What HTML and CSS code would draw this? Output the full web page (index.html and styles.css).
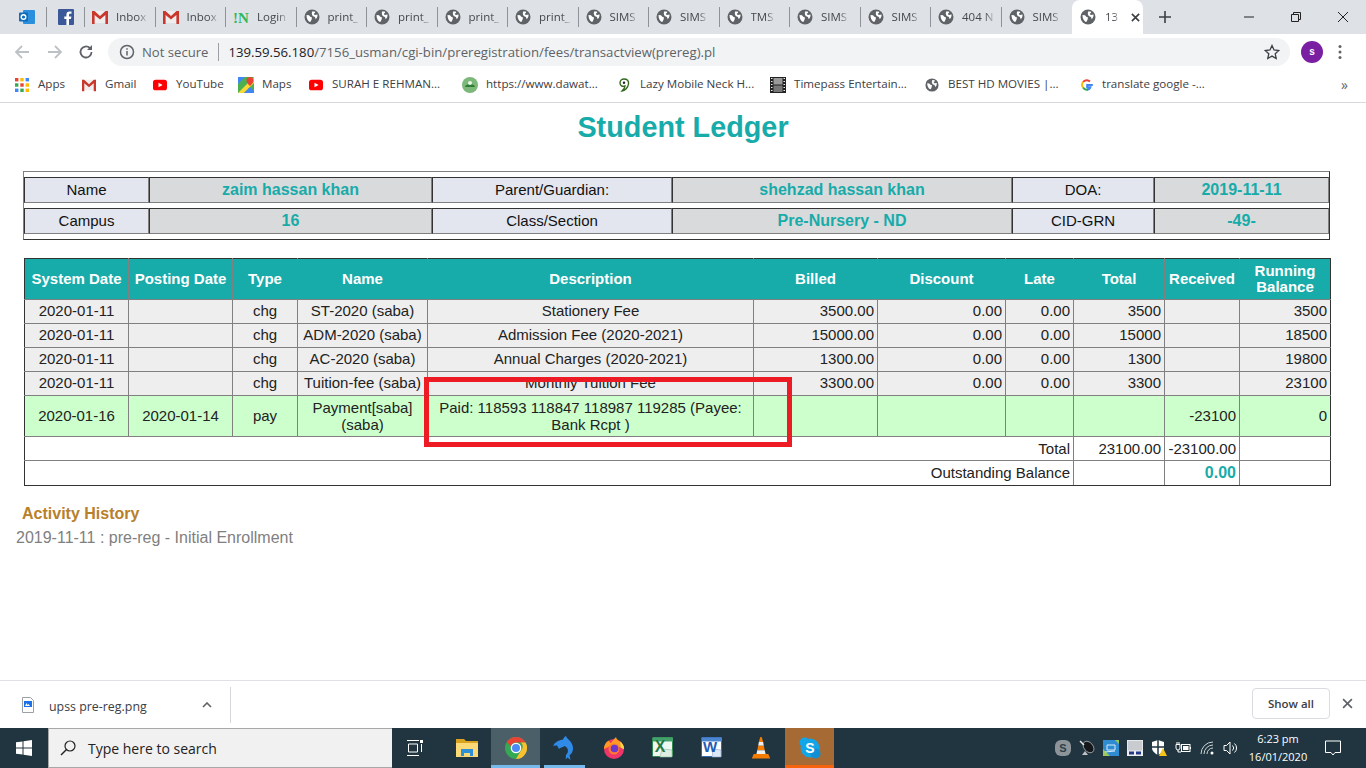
FILE: index.html
```html
<!DOCTYPE html>
<html lang="en">
<head>
<meta charset="utf-8">
<title>Student Ledger</title>
<link rel="stylesheet" href="styles.css">
</head>
<body>
<svg class="defs" width="0" height="0" aria-hidden="true">
  <symbol id="globe" viewBox="0 0 16 16">
    <circle cx="8" cy="8" r="7.500" fill="#5f6368"/>
    <path d="M2.500 6l2.500.2 1.300 1.600 1.700.6-.4 2.200-.9 2-.8.3C4 12 2.400 9.500 2.500 6zM8 2.500l2.700-.1.600 1.200-1.500 1.100.9 1.300 2.800-.4c.2 1.700-.4 3.400-1.700 4.600l-.9-2.200-2.200-.9-.9-2z" fill="#fff"/>
  </symbol>
  <symbol id="gmail" viewBox="0 0 16 14">
    <path d="M0 1h16v12H0z" fill="#eee"/>
    <path d="M0 1h2.500L8 6l5.500-5H16v13h-2.600V5L8 9.500 2.600 5v9H0z" fill="#c8382c"/>
  </symbol>
  <symbol id="yt" viewBox="0 0 16 12">
    <rect width="16" height="12" rx="3" fill="#f00"/>
    <path d="M6.300 3.300L11 6 6.300 8.700z" fill="#fff"/>
  </symbol>
</svg>

<header class="chrome">
  <div class="tabstrip">
    <div class="tab pinned">
      <svg class="ico16" viewBox="0 0 16 16"><rect x="4" y="1" width="12" height="14" rx="1" fill="#2a8fdc"/><rect x="0" y="3.500" width="9" height="9" rx="1" fill="#0f6cbd"/><circle cx="4.500" cy="8" r="2.300" fill="none" stroke="#fff" stroke-width="1.400"/></svg>
    </div>
    <div class="tab pinned">
      <svg class="ico16" viewBox="0 0 16 16"><rect width="16" height="16" rx="1" fill="#3b5998"/><path d="M11 16V10h2l.4-2.500H11V6c0-.8.3-1.200 1.200-1.200h1.300V2.600C13 2.500 12.300 2.500 11.500 2.500 9.600 2.500 8.400 3.600 8.400 5.700v1.800H6.300V10h2.100v6z" fill="#fff"/></svg>
    </div>
    <div class="tab"><svg class="ico16"><use href="#gmail"/></svg><span class="tab-title">Inbox</span></div>
    <div class="tab"><svg class="ico16"><use href="#gmail"/></svg><span class="tab-title">Inbox</span></div>
    <div class="tab"><svg class="ico16" viewBox="0 0 16 16"><text x="0" y="14" class="login-mark">!N</text></svg><span class="tab-title">Login</span></div>
    <div class="tab"><svg class="ico16"><use href="#globe"/></svg><span class="tab-title">print_</span></div>
    <div class="tab"><svg class="ico16"><use href="#globe"/></svg><span class="tab-title">print_</span></div>
    <div class="tab"><svg class="ico16"><use href="#globe"/></svg><span class="tab-title">print_</span></div>
    <div class="tab"><svg class="ico16"><use href="#globe"/></svg><span class="tab-title">print_</span></div>
    <div class="tab"><svg class="ico16"><use href="#globe"/></svg><span class="tab-title">SIMS</span></div>
    <div class="tab"><svg class="ico16"><use href="#globe"/></svg><span class="tab-title">SIMS</span></div>
    <div class="tab"><svg class="ico16"><use href="#globe"/></svg><span class="tab-title">TMS</span></div>
    <div class="tab"><svg class="ico16"><use href="#globe"/></svg><span class="tab-title">SIMS</span></div>
    <div class="tab"><svg class="ico16"><use href="#globe"/></svg><span class="tab-title">SIMS</span></div>
    <div class="tab"><svg class="ico16"><use href="#globe"/></svg><span class="tab-title">404 N</span></div>
    <div class="tab last"><svg class="ico16"><use href="#globe"/></svg><span class="tab-title">SIMS</span></div>
    <div class="tab active"><svg class="ico16"><use href="#globe"/></svg><span class="tab-title short">13</span>
      <svg class="tab-x" viewBox="0 0 10 10"><path d="M1 1l8 8M9 1l-8 8" stroke="#3c4043" stroke-width="1.800"/></svg>
    </div>
    <svg class="newtab" viewBox="0 0 12 12"><path d="M6 0v12M0 6h12" stroke="#3c4043" stroke-width="1.600"/></svg>
    <div class="winctl">
      <svg class="win-ico" viewBox="0 0 12 12"><path d="M1 6h10" stroke="#222" stroke-width="1"/></svg>
      <svg class="win-ico" viewBox="0 0 12 12"><path d="M1.500 3.500h7v7h-7zM3.500 3.500v-2h7v7h-2" fill="none" stroke="#222" stroke-width="1"/></svg>
      <svg class="win-ico" viewBox="0 0 12 12"><path d="M1 1l10 10M11 1L1 11" stroke="#222" stroke-width="1"/></svg>
    </div>
  </div>

  <div class="toolbar">
    <svg class="nav-ico first" viewBox="0 0 16 16"><path d="M15 8H2M8 2L2 8l6 6" fill="none" stroke="#bdc1c6" stroke-width="1.800"/></svg>
    <svg class="nav-ico forward" viewBox="0 0 16 16"><path d="M1 8h13M8 2l6 6-6 6" fill="none" stroke="#bdc1c6" stroke-width="1.800"/></svg>
    <svg class="nav-ico" viewBox="0 0 16 16"><path d="M13.500 8a5.500 5.500 0 1 1-1.700-4" fill="none" stroke="#5f6368" stroke-width="1.800"/><path d="M14 1v5H9z" fill="#5f6368"/></svg>
    <div class="omnibox">
      <svg class="info-ico" viewBox="0 0 16 16"><circle cx="8" cy="8" r="6.500" fill="none" stroke="#5f6368" stroke-width="1.500"/><path d="M8 7v4.500M8 4.300v1.500" stroke="#5f6368" stroke-width="1.500"/></svg>
      <span class="secure">Not secure</span>
      <span class="omni-sep"></span>
      <span class="url"><span class="host">139.59.56.180</span>/7156_usman/cgi-bin/preregistration/fees/transactview(prereg).pl</span>
      <svg class="star" viewBox="0 0 16 16"><path d="M8 1.500l2 4.500 4.800.5-3.600 3.200 1 4.800L8 12.100l-4.200 2.400 1-4.800L1.200 6.500 6 6z" fill="none" stroke="#3c4043" stroke-width="1.300"/></svg>
    </div>
    <div class="avatar">s</div>
    <svg class="kebab" viewBox="0 0 4 16"><circle cx="2" cy="2.500" r="1.500" fill="#5f6368"/><circle cx="2" cy="8" r="1.500" fill="#5f6368"/><circle cx="2" cy="13.500" r="1.500" fill="#5f6368"/></svg>
  </div>

  <div class="bookmarks">
    <div class="bm bm-apps"><svg class="ico14" viewBox="0 0 14 14"><g><rect width="3.400" height="3.400" fill="#ea4335"/><rect x="5.300" width="3.400" height="3.400" fill="#fbbc05"/><rect x="10.600" width="3.400" height="3.400" fill="#4285f4"/><rect y="5.300" width="3.400" height="3.400" fill="#34a853"/><rect x="5.300" y="5.300" width="3.400" height="3.400" fill="#ea4335"/><rect x="10.600" y="5.300" width="3.400" height="3.400" fill="#fbbc05"/><rect y="10.600" width="3.400" height="3.400" fill="#4285f4"/><rect x="5.300" y="10.600" width="3.400" height="3.400" fill="#34a853"/><rect x="10.600" y="10.600" width="3.400" height="3.400" fill="#fbbc05"/></g></svg><span>Apps</span></div>
    <div class="bm bm-gmail"><svg class="ico14"><use href="#gmail"/></svg><span>Gmail</span></div>
    <div class="bm bm-yt"><svg class="ico14"><use href="#yt"/></svg><span>YouTube</span></div>
    <div class="bm bm-maps wide-ico"><svg class="ico16" viewBox="0 0 16 16"><path d="M0 0h16v16H0z" fill="#4caf50"/><path d="M0 16L16 0v6L6 16z" fill="#fdd835"/><path d="M0 0h7L0 7z" fill="#4285f4"/><path d="M6 16l6-6 4 4v2z" fill="#4285f4"/><path d="M12 0a3.500 3.500 0 0 1 3.500 3.500C15.500 6 12 9 12 9S8.500 6 8.500 3.500A3.500 3.500 0 0 1 12 0z" fill="#ea4335"/></svg><span>Maps</span></div>
    <div class="bm bm-long"><svg class="ico14"><use href="#yt"/></svg><span>SURAH E REHMAN...</span></div>
    <div class="bm bm-longer wide-ico"><svg class="ico16" viewBox="0 0 16 16"><circle cx="8" cy="8" r="8" fill="#7cb87a"/><path d="M3 10a5 3 0 0 1 10 0z" fill="#2e7d32"/><circle cx="8" cy="6" r="2" fill="#e8f5e9"/></svg><span>https://www.dawat...</span></div>
    <div class="bm bm-long"><svg class="ico14" viewBox="0 0 14 14"><path d="M7 1c3 0 5 1.500 4.500 5C11 9.500 8 13 5 13c2-2 3-3.500 3-5-2 1-5 0-5-3C3 2.500 5 1 7 1z" fill="#fff" stroke="#33691e" stroke-width="1.400"/><circle cx="7" cy="4.800" r="1.200" fill="#222"/></svg><span>Lazy Mobile Neck H...</span></div>
    <div class="bm bm-longer wide-ico"><svg class="ico16" viewBox="0 0 16 16"><rect width="16" height="16" fill="#222"/><rect x="3.500" y="1" width="9" height="6.500" fill="#999"/><rect x="3.500" y="8.500" width="9" height="6.500" fill="#777"/><path d="M1 1.500h1.500M1 4.500h1.500M1 7.500h1.500M1 10.500h1.500M1 13.500h1.500M13.500 1.500H15M13.500 4.500H15M13.500 7.500H15M13.500 10.500H15M13.500 13.500H15" stroke="#eee" stroke-width="1.200"/></svg><span>Timepass Entertain...</span></div>
    <div class="bm bm-longer"><svg class="ico14"><use href="#globe"/></svg><span>BEST HD MOVIES |...</span></div>
    <div class="bm bm-google"><svg class="ico14" viewBox="0 0 14 14"><path d="M12.800 7H7.200v2.200h3.200A3.300 3.300 0 0 1 7 11.500" fill="none" stroke="#4285f4" stroke-width="2"/><path d="M10 3.500A4.700 4.700 0 0 0 3 4" fill="none" stroke="#ea4335" stroke-width="2"/><path d="M3 4a4.700 4.700 0 0 0 0 5.500" fill="none" stroke="#fbbc05" stroke-width="2"/><path d="M3 9.500a4.700 4.700 0 0 0 5 2" fill="none" stroke="#34a853" stroke-width="2"/></svg><span>translate google -...</span></div>
    <span class="bm-more">»</span>
  </div>
</header>

<main class="page">
  <h1 class="title">Student Ledger</h1>

  <table class="info">
    <colgroup><col class="i1"><col class="i2"><col class="i3"><col class="i4"><col class="i5"><col class="i6"></colgroup>
    <tr>
      <td class="lbl">Name</td><td class="val">zaim hassan khan</td>
      <td class="lbl">Parent/Guardian:</td><td class="val">shehzad hassan khan</td>
      <td class="lbl">DOA:</td><td class="val">2019-11-11</td>
    </tr>
    <tr>
      <td class="lbl">Campus</td><td class="val">16</td>
      <td class="lbl">Class/Section</td><td class="val">Pre-Nursery - ND</td>
      <td class="lbl">CID-GRN</td><td class="val">-49-</td>
    </tr>
  </table>

  <div class="ledger-wrap">
    <table class="ledger">
      <colgroup><col class="c1"><col class="c2"><col class="c3"><col class="c4"><col class="c5"><col class="c6"><col class="c7"><col class="c8"><col class="c9"><col class="c10"><col class="c11"></colgroup>
      <thead>
        <tr><th>System Date</th><th>Posting Date</th><th>Type</th><th>Name</th><th>Description</th><th>Billed</th><th>Discount</th><th>Late</th><th>Total</th><th>Received</th><th>Running Balance</th></tr>
      </thead>
      <tbody>
        <tr class="chg"><td class="ctr">2020-01-11</td><td></td><td class="ctr">chg</td><td class="ctr">ST-2020 (saba)</td><td class="ctr">Stationery Fee</td><td class="num">3500.00</td><td class="num">0.00</td><td class="num">0.00</td><td class="num">3500</td><td></td><td class="num">3500</td></tr>
        <tr class="chg"><td class="ctr">2020-01-11</td><td></td><td class="ctr">chg</td><td class="ctr">ADM-2020 (saba)</td><td class="ctr">Admission Fee (2020-2021)</td><td class="num">15000.00</td><td class="num">0.00</td><td class="num">0.00</td><td class="num">15000</td><td></td><td class="num">18500</td></tr>
        <tr class="chg"><td class="ctr">2020-01-11</td><td></td><td class="ctr">chg</td><td class="ctr">AC-2020 (saba)</td><td class="ctr">Annual Charges (2020-2021)</td><td class="num">1300.00</td><td class="num">0.00</td><td class="num">0.00</td><td class="num">1300</td><td></td><td class="num">19800</td></tr>
        <tr class="chg"><td class="ctr">2020-01-11</td><td></td><td class="ctr">chg</td><td class="ctr">Tuition-fee (saba)</td><td class="ctr">Monthly Tuition Fee</td><td class="num">3300.00</td><td class="num">0.00</td><td class="num">0.00</td><td class="num">3300</td><td></td><td class="num">23100</td></tr>
        <tr class="pay"><td class="ctr">2020-01-16</td><td class="ctr">2020-01-14</td><td class="ctr">pay</td><td class="ctr">Payment[saba] (saba)</td><td class="ctr">Paid: 118593 118847 118987 119285 (Payee: Bank Rcpt )</td><td></td><td></td><td></td><td></td><td class="num">-23100</td><td class="num">0</td></tr>
        <tr class="sum"><td class="num" colspan="8">Total</td><td class="num">23100.00</td><td class="num">-23100.00</td><td></td></tr>
        <tr class="sum last-sum"><td class="num" colspan="8">Outstanding Balance</td><td></td><td class="num balance">0.00</td><td></td></tr>
      </tbody>
    </table>
    <div class="highlight"></div>
  </div>

  <h2 class="activity">Activity History</h2>
  <p class="history">2019-11-11 : pre-reg - Initial Enrollment</p>
</main>

<section class="downloads">
  <div class="dl-item">
    <svg class="dl-file" viewBox="0 0 12 16"><path d="M.5.500h8l3 3v12H.5z" fill="#fff" stroke="#9aa0a6"/><rect x="2" y="4" width="8" height="6" fill="#1a73e8"/><path d="M3 9l1.500-3 1 2 1-1 1.500 2z" fill="#fff"/></svg>
    <span class="dl-name">upss pre-reg.png</span>
    <svg class="dl-chev" viewBox="0 0 10 6"><path d="M1 5l4-4 4 4" fill="none" stroke="#5f6368" stroke-width="1.600"/></svg>
  </div>
  <button class="showall">Show all</button>
  <svg class="dl-close" viewBox="0 0 10 10"><path d="M1 1l8 8M9 1l-8 8" stroke="#5f6368" stroke-width="1.500"/></svg>
</section>

<footer class="taskbar">
  <div class="start"><svg class="start-ico" viewBox="0 0 16 16"><path d="M0 2.300L6.500 1.400V7.500H0zM7.500 1.300L16 0v7.500H7.500zM0 8.500h6.500v6.100L0 13.700zM7.500 8.500H16V16l-8.500-1.300z" fill="#fff"/></svg></div>
  <div class="search">
    <svg class="search-ico" viewBox="0 0 16 16"><circle cx="10" cy="6" r="5" fill="none" stroke="#222" stroke-width="1.200"/><path d="M6.500 9.500L1 15" stroke="#222" stroke-width="1.400"/></svg>
    <span>Type here to search</span>
  </div>
  <div class="app taskview"><svg class="tb-ico-s" viewBox="0 0 16 16"><path d="M0 .500h12M0 15.500h12M1.500 4h9v8h-9zM14.500 4v8" fill="none" stroke="#fff" stroke-width="1"/><rect x="13" y="0" width="3" height="3" fill="#fff"/></svg></div>
  <div class="app"><svg class="tb-ico" viewBox="0 0 22 22"><path d="M0 2h8l2 2h12v16H0z" fill="#d9a21f"/><path d="M0 6h22v14H0z" fill="#fcd977"/><path d="M5 12h12v7h-3v-3H8v3H5z" fill="#2d8fd5"/></svg></div>
  <div class="app app-on"><svg class="tb-ico" viewBox="0 0 22 22"><circle cx="11" cy="11" r="11" fill="#34a853"/><path d="M11 0a11 11 0 0 1 9.530 5.500H11a5.500 5.500 0 0 0-5.200 3.700L1.800 5A11 11 0 0 1 11 0z" fill="#ea4335"/><path d="M20.530 5.500A11 11 0 0 1 11 22l4.600-7.900A5.500 5.500 0 0 0 15.800 5.500z" fill="#fbc02d"/><circle cx="11" cy="11" r="5.300" fill="#fff"/><circle cx="11" cy="11" r="4" fill="#4c8bf5"/></svg></div>
  <div class="app app-run"><svg class="dolphin" viewBox="0 0 24 24"><path d="M13 0c.5 1.500 1 2 2.500 3.500 3 2.500 4.500 5.500 4.500 9 0 3-1.300 5.200-3.500 6.700l1 4.800-3-2.500-1.800 2 .3-4.500c1.600-1.500 2.300-3.300 1.800-5.500-.5-1.500-1.500-2.700-3-3.500-2 1.200-4.500 1.500-5.800 3L4 9.500 0 9.700C2 6 5.500 4 10 3.500 10.500 2 11.500.500 13 0z" fill="#2f8ae8"/></svg></div>
  <div class="app"><svg class="tb-ico" viewBox="0 0 22 22"><circle cx="11" cy="12" r="10" fill="#f0356b"/><path d="M1 12C1 7 4 4.500 6 3.500 6 5 6.800 5.800 8 6c1.500-2 3-4 5-6 .3 2 1.500 3 4 4.500 3 2 4 5 4 7.500l-5-2c-3-3-8-3-10.500 0z" fill="#ff9a22"/><path d="M17 4.500c2 1.500 4 4 4 7.500l-3-1z" fill="#ffd54a"/><circle cx="11" cy="12" r="5.500" fill="#ff7a2e"/><circle cx="11.500" cy="11.500" r="3.800" fill="#6a37d0"/></svg></div>
  <div class="app"><svg class="tb-ico" viewBox="0 0 22 22"><rect x=".5" y=".5" width="20" height="19" rx="1" fill="#f0f7f1" stroke="#2f8a52"/><path d="M1 .5h20v4H1z" fill="#43a26a"/><path d="M10 12l10 1v7H8z" fill="#dfeee3" stroke="#8cbc9b" stroke-width=".6"/><text x="8" y="15" class="tb-letter x-letter">X</text></svg></div>
  <div class="app"><svg class="tb-ico" viewBox="0 0 22 22"><rect x=".5" y=".5" width="20" height="19" rx="1" fill="#fff" stroke="#2f68b8"/><path d="M1 .5h20v4H1z" fill="#4d86d0"/><path d="M12 12l8 1v7h-9z" fill="#dfe8f6" stroke="#8ca6d0" stroke-width=".6"/><text x="9" y="15" class="tb-letter w-letter">W</text></svg></div>
  <div class="app"><svg class="tb-ico" viewBox="0 0 22 24"><path d="M11 0c.8 0 1 .5 1.300 1.500l1 4H8.700l1-4C10 .5 10.200 0 11 0z" fill="#f57c00"/><path d="M8.700 5.500h4.600l.8 4H7.900z" fill="#eee"/><path d="M7.900 9.500h6.200l1 5H6.900z" fill="#f57c00"/><path d="M6.900 14.500h8.200l.9 4H6z" fill="#eee"/><path d="M3 18.500h16l2 5H1z" fill="#f57c00"/></svg></div>
  <div class="app app-skype"><svg class="tb-ico" viewBox="0 0 22 22"><circle cx="11" cy="11" r="9.500" fill="#12a5e8"/><circle cx="5.500" cy="5.500" r="5" fill="#12a5e8"/><circle cx="16.500" cy="16.500" r="5" fill="#0f8fd6"/><text x="11" y="16" class="tb-letter sky">S</text></svg></div>
  <div class="tray">
    <svg class="tray-ico" viewBox="0 0 16 16"><rect x="0" y="0" width="16" height="16" rx="6" fill="#8d9499"/><text x="8" y="12" class="tray-s">S</text></svg>
    <svg class="tray-ico" viewBox="0 0 16 16"><ellipse cx="9.500" cy="7" rx="4.500" ry="6.500" transform="rotate(-40 9.500 7)" fill="#15181a" stroke="#d5d8da" stroke-width=".6"/><path d="M1 1l4 4" stroke="#eee" stroke-width="1.400"/><path d="M3 15l3-4 3 4z" fill="#bfc3c6"/></svg>
    <svg class="tray-ico" viewBox="0 0 16 16"><rect x="0" y="0" width="16" height="16" fill="#2f8cd0"/><path d="M0 16V9l7 7zM16 0v4l-4-4z" fill="#9cc85a"/><path d="M4 5h8v5H4zM2 12l10-1" fill="none" stroke="#d8ecfa"/></svg>
    <svg class="tray-ico" viewBox="0 0 16 16"><rect x=".5" y=".5" width="15" height="15" fill="#c8ccd0" stroke="#e8e8e8"/><path d="M0 10.500h16V16H0z" fill="#eee"/><rect x="2" y="11.500" width="5" height="3" fill="#223a88"/><rect x="9" y="11.500" width="5" height="3" fill="#223a88"/></svg>
    <svg class="tray-ico" viewBox="0 0 16 16"><path d="M7 0l6 2v6c0 3-3 5.500-6 7-3-1.500-6-4-6-7V2z" fill="#fff"/><path d="M7 0v15M1 7h12" stroke="#1f3541" stroke-width="1.500"/><path d="M12 8l4 8H8z" fill="#f6c31b"/></svg>
    <svg class="tray-ico" viewBox="0 0 16 16"><path d="M1 4.500h4v3.500a2 2 0 0 1-4 0zM2 2v2.500M4 2v2.500M3 10v2h3" fill="none" stroke="#fff"/><rect x="6.500" y="4.500" width="8.500" height="7" fill="none" stroke="#fff"/><rect x="8" y="6" width="5.500" height="4" fill="#fff"/><path d="M15.500 7v2" stroke="#fff"/></svg>
    <svg class="tray-ico" viewBox="0 0 16 16"><path d="M2 14A12 12 0 0 1 14 2M5 14a9 9 0 0 1 9-9M8 14a6 6 0 0 1 6-6" fill="none" stroke="#cfd4d7" stroke-width="1"/><circle cx="13" cy="13" r="1.500" fill="#fff"/></svg>
    <svg class="tray-ico" viewBox="0 0 16 16"><path d="M1 5.500h2.500L7 2v12l-3.500-3.500H1z" fill="none" stroke="#fff"/><path d="M9.500 5.500a3.500 3.500 0 0 1 0 5M11.500 3.500a6 6 0 0 1 0 9" fill="none" stroke="#fff"/></svg>
  </div>
  <div class="clock"><span>6:23 pm</span><span>16/01/2020</span></div>
  <svg class="notif" viewBox="0 0 16 16"><path d="M.500 1h15v11.500H10L8 15l-2-2.500H.500z" fill="none" stroke="#fff"/></svg>
</footer>
</body>
</html>
```
FILE: styles.css
```css
* { box-sizing: border-box; }
html, body { margin: 0; padding: 0; }
body {
  width: 1366px;
  height: 768px;
  overflow: hidden;
  display: flex;
  flex-direction: column;
  background: #fff;
  font-family: "Liberation Sans", Arial, sans-serif;
}
.defs { display: block; height: 0; width: 0; overflow: hidden; }
svg { flex: none; display: block; }
.ico16 { width: 16px; height: 16px; }
.ico14 { width: 14px; height: 14px; }

/* browser chrome */
.chrome { flex: none; height: 103px; border-bottom: 1px solid #d7d9dc; font-family: "Open Sans", "Noto Sans", sans-serif; }
.tabstrip { height: 34px; background: #dee1e6; display: flex; align-items: center; padding-left: 8px; }
.tab {
  width: 70.500px;
  height: 34px;
  display: flex;
  align-items: center;
  padding-left: 7px;
  gap: 8px;
  font-size: 11.500px;
  color: #45484c;
  overflow: hidden;
  background: linear-gradient(#8f9296, #8f9296) right 7px / 1px 20px no-repeat;
}
.tab.pinned { width: 38.500px; justify-content: center; padding-left: 0; }
.tab.last { background: none; }
.tab-title {
  padding-bottom: 2px;
  white-space: nowrap;
  -webkit-mask-image: linear-gradient(90deg, #000 72%, rgba(0, 0, 0, .25));
  mask-image: linear-gradient(90deg, #000 72%, rgba(0, 0, 0, .25));
}
.tab.active { background: #fff; border-radius: 8px 8px 0 0; padding-left: 8px; }
.tab-title.short { margin-left: 1px; }
.tab-x { width: 9px; height: 9px; margin-left: 5px; }
.newtab { width: 12px; height: 12px; margin-left: 16px; }
.login-mark { font: bold 15px "Liberation Serif", serif; fill: #2eb85c; }
.winctl { margin-left: auto; display: flex; gap: 35px; padding-right: 17px; }
.win-ico { width: 12px; height: 12px; }

.toolbar { height: 35px; background: #fff; display: flex; align-items: center; }
.nav-ico { width: 16px; height: 16px; margin-left: 15px; }
.nav-ico.first { margin-left: 14px; }
.nav-ico.forward { margin-left: 17px; }
.omnibox {
  width: 1182px;
  height: 28px;
  margin-left: 14px;
  border-radius: 14px;
  background: #f1f3f4;
  display: flex;
  align-items: center;
  padding-left: 11px;
  color: #5f6368;
  white-space: nowrap;
}
.info-ico { width: 16px; height: 16px; }
.secure { margin-left: 7px; font-size: 13.100px; }
.omni-sep { width: 1px; height: 18px; background: #9aa0a6; margin: 0 9px 0 10px; }
.url { font-size: 13.200px; }
.host { color: #202124; }
.star { width: 16px; height: 16px; margin-left: auto; margin-right: 10px; }
.avatar {
  width: 22px;
  height: 22px;
  border-radius: 50%;
  background: #7b1fa2;
  color: #fff;
  font: bold 10px/22px "Liberation Sans", sans-serif;
  text-align: center;
  margin-left: 11px;
}
.kebab { width: 4px; height: 16px; margin-left: 15px; }

.bookmarks { height: 33px; display: flex; align-items: center; padding: 0 0 2px 15px; font-size: 11.600px; color: #3c4043; white-space: nowrap; }
.bm { flex: none; display: flex; align-items: center; gap: 9px; }
.bm span { padding-bottom: 2px; }
.bm.wide-ico { gap: 8px; }
.bm-apps { width: 67px; }
.bm-gmail { width: 71px; }
.bm-yt { width: 85px; }
.bm-maps { width: 71px; }
.bm-long { width: 153px; }
.bm-longer { width: 155px; }
.bm-google { gap: 8px; }
.bm-more { margin-left: auto; margin-right: 18px; color: #5f6368; font-size: 14px; }

/* page */
.page { flex: 1; min-height: 0; padding-top: 8px; color: #222; }
.title { margin: 0 0 27px; text-align: center; font-size: 28.800px; line-height: 33px; font-weight: bold; color: #17aba9; }
.info {
  width: 1307px;
  margin-left: 23px;
  table-layout: fixed;
  border-collapse: separate;
  border-spacing: 0 5px;
  border: 1px solid;
  border-color: #808080 #333 #333 #808080;
  font-size: 15px;
}
.i1 { width: 125px; } .i2 { width: 283px; } .i3 { width: 240px; } .i4 { width: 340px; } .i5 { width: 142px; }
.info td {
  height: 26px;
  padding: 0;
  text-align: center;
  border: 1px solid;
  border-color: #333 #808080 #808080 #333;
}
.info td.lbl { background: #e3e6ef; color: #111; padding-bottom: 1px; }
.info td.val { background: #d9dadc; color: #17aba9; font-weight: bold; font-size: 16px; }

.ledger-wrap { position: relative; margin: 18px 0 0 24px; width: 1306px; }
.ledger {
  width: 1306px;
  table-layout: fixed;
  border-collapse: collapse;
  border: 1px solid #333;
  font-size: 15px;
  color: #222;
}
.c1, .c2 { width: 104px; } .c3 { width: 65px; } .c4 { width: 130px; } .c5 { width: 326px; }
.c6 { width: 124px; } .c7 { width: 128px; } .c8 { width: 68px; } .c9 { width: 91px; } .c10 { width: 75px; } .c11 { width: 91px; }
.ledger th {
  height: 41px;
  padding: 0 2px 1px;
  background: #17aba9;
  color: #fff;
  font-size: 15px;
  line-height: 16px;
  font-weight: bold;
  border: 1px solid #808080;
  border-top-color: #333;
}
.ledger td { height: 24px; padding: 0 3px; border: 1px solid #808080; line-height: 17px; }
.ledger tr > :first-child { border-left-color: #333; }
.ledger tr > :last-child { border-right-color: #333; }
.ledger .chg td { background: #eee; padding-bottom: 2px; }
.ledger .pay td { background: #cfc; height: 41px; padding-bottom: 1px; }
.sum td { background: #fff; }
.ledger .last-sum td { height: 25px; padding-bottom: 1px; border-bottom-color: #333; }
.ctr { text-align: center; }
.num { text-align: right; }
.balance { color: #17aba9; font-weight: bold; font-size: 16px; }
.highlight {
  position: absolute;
  left: 400px;
  top: 119px;
  width: 368px;
  height: 70px;
  border: 5px solid #ed1c24;
}
.activity { margin: 18px 0 0 22px; font-size: 16px; line-height: 20px; font-weight: bold; color: #b8802a; }
.history { margin: 4px 0 0 16px; font-size: 16px; line-height: 20px; color: #808080; }

/* download bar */
.downloads {
  flex: none;
  height: 48px;
  border-top: 1px solid #dfe1e4;
  display: flex;
  align-items: center;
  font-family: "Open Sans", sans-serif;
  font-size: 12px;
  color: #3c4043;
}
.dl-item { width: 231px; height: 36px; display: flex; align-items: center; padding-left: 22px; border-right: 1px solid #d5d7da; }
.dl-file { width: 12px; height: 16px; }
.dl-name { margin: 3px 0 0 15px; width: 98px; font-size: 12.400px; white-space: nowrap; }
.dl-chev { width: 10px; height: 6px; margin-left: 55px; }
.showall {
  margin: 0 0 3px auto;
  width: 78px;
  height: 31px;
  border: 1px solid #dadce0;
  border-radius: 4px;
  background: #fff;
  color: #3c4043;
  font: 600 11.500px "Open Sans", sans-serif;
}
.dl-close { width: 11px; height: 11px; margin: 0 13px 3px 12px; }

/* taskbar */
.taskbar {
  flex: none;
  height: 40px;
  background: #20353f;
  display: flex;
  align-items: center;
  color: #fff;
  font-family: "Open Sans", sans-serif;
}
.start { width: 48px; display: flex; justify-content: center; }
.start-ico { width: 16px; height: 16px; }
.search {
  width: 344px;
  height: 40px;
  background: #f1f1f1;
  border: 1px solid #a8a8a8;
  border-width: 1px 0 1px 1px;
  display: flex;
  align-items: center;
  padding-left: 11px;
  gap: 12px;
  color: #222;
  font-size: 14px;
}
.search-ico { width: 16px; height: 16px; }
.app { width: 49px; height: 40px; display: flex; align-items: center; justify-content: center; border-bottom: 3px solid transparent; padding-top: 2px; }
.taskview { margin-left: 1px; padding-right: 5px; }
.app-on { background: #4a5f67; border-bottom-color: #76b9ed; }
.app-run { border-image: linear-gradient(90deg, transparent 10%, #76b9ed 10%, #76b9ed 90%, transparent 90%) 1; }
.app-skype { background: #a66a35; border-bottom-color: #f7630c; }
.tb-ico { width: 22px; height: 22px; }
.tb-ico-s { width: 16px; height: 16px; }
.dolphin { width: 24px; height: 24px; }
.tb-letter { font: bold 12px "Liberation Sans", sans-serif; fill: #fff; text-anchor: middle; }
.x-letter { font-size: 16px; fill: #1f7a45; }
.w-letter { font-size: 15px; fill: #1f5cb5; }
.sky { font-size: 14px; }
.tray { margin-left: auto; display: flex; gap: 8px; align-items: center; }
.tray-ico { width: 16px; height: 16px; }
.tray-s { font: bold 11px "Liberation Sans", sans-serif; fill: #2b3f49; text-anchor: middle; }
.clock { width: 72px; margin-left: 3px; display: flex; flex-direction: column; align-items: center; font-size: 11px; line-height: 18px; }
.notif { width: 16px; height: 16px; margin: 0 25px 0 11px; }
```
